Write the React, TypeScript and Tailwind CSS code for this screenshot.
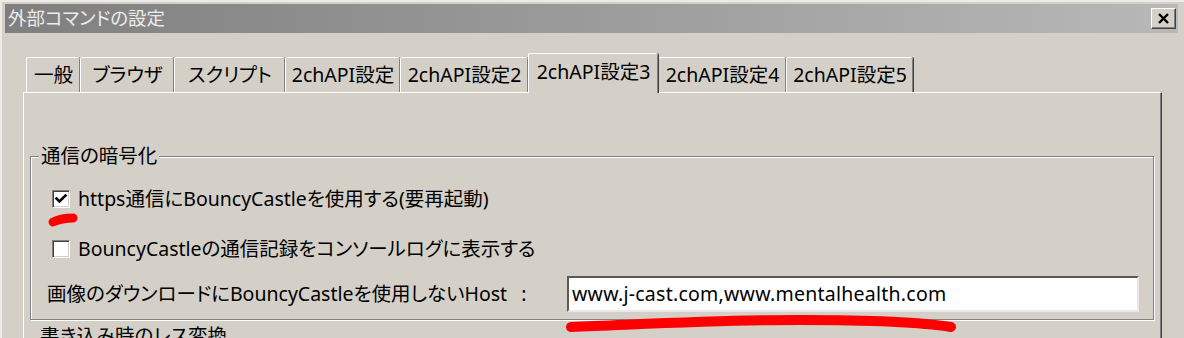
import React from "react";

const FONT = {
  fontFamily: '"Noto Sans", "Noto Sans CJK JP", sans-serif',
};

function Tab({ label, width, selected }: { label: string; width: number; selected?: boolean }) {
  if (selected) {
    return (
      <div
        className="relative z-10 -mb-[1px] h-[40px] flex items-center justify-center bg-[#d4d0c8] border-t border-l border-white rounded-t-[2px] shadow-[inset_-1px_0_0_#808080,1px_0_0_#404040] pb-[4px]"
        style={{ width }}
      >
        {label}
      </div>
    );
  }
  return (
    <div
      className="h-[35px] flex items-center justify-center bg-[#d4d0c8] border-t border-l border-white rounded-t-[2px] shadow-[inset_-1px_0_0_#808080,1px_0_0_#404040] pb-[1px]"
      style={{ width }}
    >
      {label}
    </div>
  );
}

function CheckBox({ checked }: { checked?: boolean }) {
  return (
    <span className="w-[18px] h-[18px] shrink-0 bg-white border border-t-[#808080] border-l-[#808080] border-b-white border-r-white shadow-[inset_1px_1px_0_#404040,inset_-1px_-1px_0_#d4d0c8] flex items-center justify-center">
      {checked && (
        <svg width="14" height="14" viewBox="0 0 14 14">
          <path d="M2.5 6.5 L5.5 9.5 L11.5 3.5" fill="none" stroke="#000" strokeWidth="2.6" strokeLinecap="square" />
        </svg>
      )}
    </span>
  );
}

export default function App() {
  const tabs = [
    { label: "一般", width: 54 },
    { label: "ブラウザ", width: 94 },
    { label: "スクリプト", width: 111 },
    { label: "2chAPI設定", width: 115 },
    { label: "2chAPI設定2", width: 128 },
    { label: "2chAPI設定3", width: 130, selected: true },
    { label: "2chAPI設定4", width: 128 },
    { label: "2chAPI設定5", width: 127 },
  ];
  return (
    <div
      className="relative w-[1184px] h-[338px] overflow-hidden bg-[#d4d0c8] text-[19.5px] text-black [font-feature-settings:'palt']"
      style={FONT}
    >
      <div className="h-full border-t-2 border-l-2 border-[#ecebe8] pt-[2px] pl-[3px] pr-[6px]">
        {/* Title bar */}
        <div className="h-[29px] flex items-center justify-between pl-[3px] pr-[2px] bg-gradient-to-r from-[#7f7f7f] to-[#b8b8b8]">
          <span className="text-[18.5px] leading-none text-[#ececec] pb-[1px]">外部コマンドの設定</span>
          <div className="w-[25px] h-[21px] bg-[#d4d0c8] border border-t-white border-l-white border-r-[#404040] border-b-[#404040] shadow-[inset_-1px_-1px_0_#808080] flex items-center justify-center">
            <svg width="13" height="11" viewBox="0 0 13 11">
              <path d="M2 1 L11 10 M11 1 L2 10" stroke="#000" strokeWidth="2.4" />
            </svg>
          </div>
        </div>

        {/* Body */}
        <div className="pl-[18px] pr-[16px] pt-[20px]">
          <div className="flex items-end pl-[3px] leading-none">
            {tabs.map((t) => (
              <Tab key={t.label} label={t.label} width={t.width} selected={t.selected} />
            ))}
          </div>
          <div className="h-[260px] border-t border-l border-white border-r border-r-[#404040] shadow-[inset_-1px_0_0_#808080] pt-[63px] pl-[6px] pr-[7px]">
            {/* Group box */}
            <div className="relative h-[164px] border border-[#808080] shadow-[inset_1px_1px_0_#fff,1px_1px_0_#fff]">
              <span className="absolute left-[8px] -top-[12px] px-[2px] bg-[#d4d0c8] leading-[22px]">通信の暗号化</span>
              <div className="pt-[33px] pl-[21px] flex items-center gap-[8px] h-[51px] leading-none">
                <CheckBox checked />
                <span>https通信にBouncyCastleを使用する(要再起動)</span>
              </div>
              <div className="mt-[32px] pl-[21px] flex items-center gap-[8px] h-[18px] leading-none">
                <CheckBox />
                <span>BouncyCastleの通信記録をコンソールログに表示する</span>
              </div>
              <div className="mt-[18px] pl-[16px] pr-[14px] flex items-center h-[36px]">
                <span className="w-[520px] leading-none">
                  画像のダウンロードにBouncyCastleを使用しないHost<span className="ml-[14px]">:</span>
                </span>
                <div className="flex-1 h-[36px] bg-white border-2 border-t-[#5a5a5a] border-l-[#5a5a5a] border-b-[#e8e8e8] border-r-[#e8e8e8] flex items-center pl-[3px] leading-none tracking-[0.25px]">
                  www.j-cast.com,www.mentalhealth.com
                </div>
              </div>
            </div>
            <div className="pl-[10px] pt-[5px] leading-[22px]">書き込み時のレス変換</div>
          </div>
        </div>
      </div>

      {/* Red hand-drawn marks */}
      <svg className="absolute left-0 top-0 pointer-events-none" width="1184" height="338">
        <path d="M53 222 Q 62 218 73 218" fill="none" stroke="#ff0000" strokeWidth="9" strokeLinecap="round" />
        <path d="M571 327 C 650 324, 720 320, 800 320 C 870 320, 920 322, 951 327" fill="none" stroke="#ff0000" strokeWidth="10" strokeLinecap="round" />
      </svg>
    </div>
  );
}
